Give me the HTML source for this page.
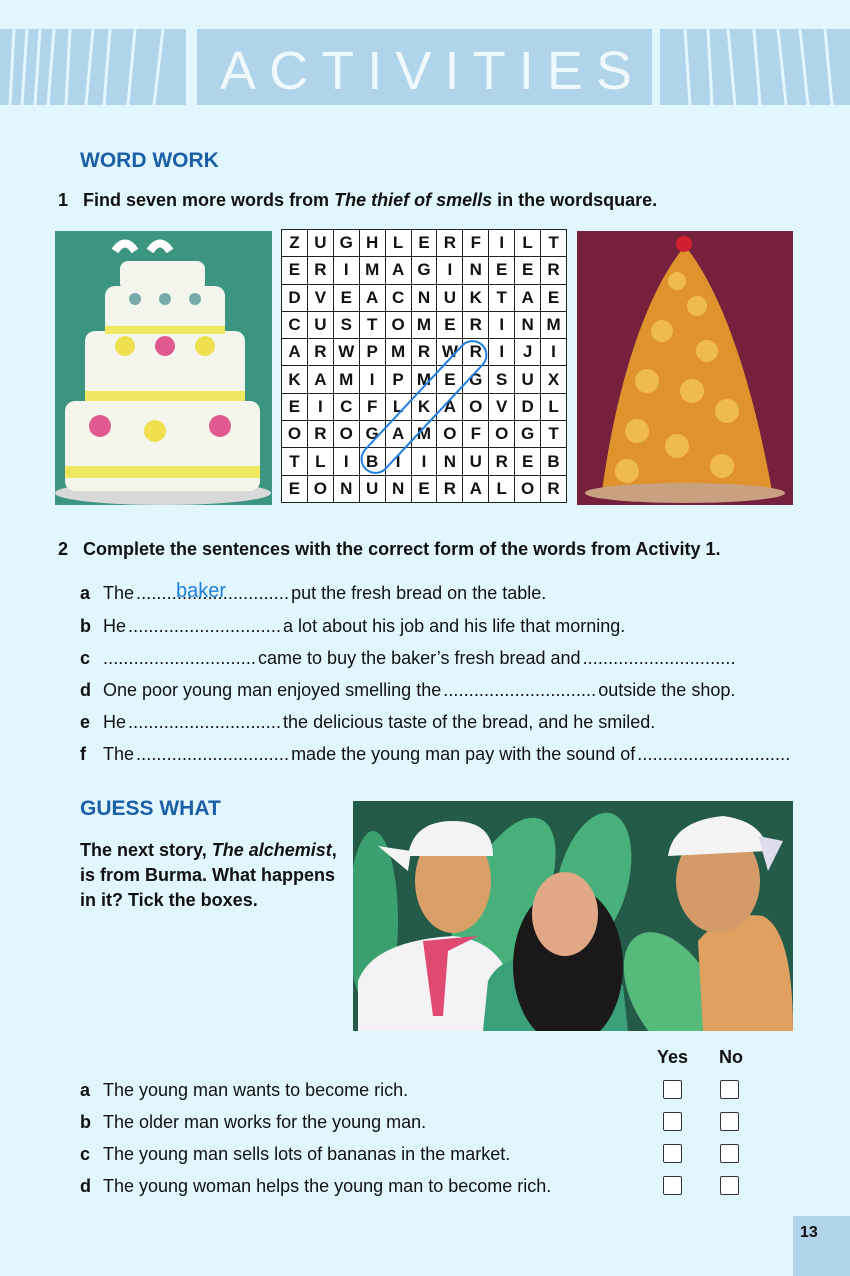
<!DOCTYPE html>
<html><head><meta charset="utf-8"><style>
body{margin:0;width:850px;height:1276px;background:#e2f6fd;position:relative;overflow:hidden;font-family:"Liberation Sans",sans-serif;color:#111}
.a{position:absolute;white-space:nowrap}
.b{font-weight:bold}
.h{color:#1a5fa8;font-weight:bold;font-size:21px}
.t{font-size:18px}
.d{letter-spacing:0.1px;margin:0 2px}
.l{font-weight:bold;font-size:18px}
.cb{position:absolute;width:17px;height:17px;border:1.5px solid #333;border-radius:2px;background:#fff}
table{border-collapse:collapse;background:#fff;table-layout:fixed;width:286px;height:274px}
td{border:1.5px solid #222;text-align:center;font-weight:bold;font-size:17px;padding:0}
</style></head><body>
<svg class="a" style="left:0;top:0" width="850" height="120">
<g fill="#b0d4ea">
<rect x="0" y="29" width="186" height="76"/>
<rect x="197" y="29" width="455" height="76"/>
<rect x="660" y="29" width="190" height="76"/>
</g>
<g stroke="#e2f6fd" stroke-width="3">
<line x1="14" y1="29" x2="10" y2="105"/><line x1="27" y1="29" x2="22" y2="105"/>
<line x1="40" y1="29" x2="35" y2="105"/><line x1="54" y1="29" x2="48" y2="105"/>
<line x1="70" y1="29" x2="66" y2="105"/><line x1="93" y1="29" x2="86" y2="105"/>
<line x1="110" y1="29" x2="104" y2="105"/><line x1="135" y1="29" x2="128" y2="105"/>
<line x1="163" y1="29" x2="154" y2="105"/>
<line x1="685" y1="29" x2="690" y2="105"/><line x1="708" y1="29" x2="712" y2="105"/>
<line x1="728" y1="29" x2="735" y2="105"/><line x1="754" y1="29" x2="760" y2="105"/>
<line x1="778" y1="29" x2="786" y2="105"/><line x1="800" y1="29" x2="808" y2="105"/>
<line x1="825" y1="29" x2="832" y2="105"/>
</g>
<text x="220" y="89" fill="#eef8fd" font-family="Liberation Sans" font-size="54" textLength="412" lengthAdjust="spacing">ACTIVITIES</text>
</svg>

<div class="a h" style="left:80px;top:149px">WORD WORK</div>
<div class="a b" style="left:58px;top:190px;font-size:18px">1&nbsp;&nbsp; Find seven more words from <i>The thief of smells</i> in the wordsquare.</div>

<svg class="a" style="left:55px;top:231px" width="217" height="274">
<rect width="217" height="274" fill="#2f8a78"/>
<rect width="217" height="274" fill="#4aa088" opacity=".5"/>
<ellipse cx="108" cy="262" rx="108" ry="12" fill="#d8d8d8"/>
<rect x="10" y="170" width="195" height="90" rx="10" fill="#f4f6ee"/>
<rect x="30" y="100" width="160" height="75" rx="10" fill="#f4f6ee"/>
<rect x="50" y="55" width="120" height="50" rx="10" fill="#f4f6ee"/>
<rect x="65" y="30" width="85" height="30" rx="8" fill="#f4f6ee"/>
<path d="M60,20 q10,-15 20,0 M95,20 q10,-15 20,0" stroke="#fff" stroke-width="8" fill="none"/>
<g fill="#f0e860"><rect x="10" y="235" width="195" height="12"/><rect x="30" y="160" width="160" height="10"/><rect x="50" y="95" width="120" height="8"/></g>
<g fill="#f0e050"><circle cx="70" cy="115" r="10"/><circle cx="150" cy="115" r="10"/><circle cx="100" cy="200" r="11"/></g>
<g fill="#e05a90"><circle cx="110" cy="115" r="10"/><circle cx="45" cy="195" r="11"/><circle cx="165" cy="195" r="11"/></g>
<g fill="#7aa"><circle cx="80" cy="68" r="6"/><circle cx="110" cy="68" r="6"/><circle cx="140" cy="68" r="6"/></g>
</svg>

<table class="a" style="left:281px;top:229px">
<tr><td>Z</td><td>U</td><td>G</td><td>H</td><td>L</td><td>E</td><td>R</td><td>F</td><td>I</td><td>L</td><td>T</td></tr>
<tr><td>E</td><td>R</td><td>I</td><td>M</td><td>A</td><td>G</td><td>I</td><td>N</td><td>E</td><td>E</td><td>R</td></tr>
<tr><td>D</td><td>V</td><td>E</td><td>A</td><td>C</td><td>N</td><td>U</td><td>K</td><td>T</td><td>A</td><td>E</td></tr>
<tr><td>C</td><td>U</td><td>S</td><td>T</td><td>O</td><td>M</td><td>E</td><td>R</td><td>I</td><td>N</td><td>M</td></tr>
<tr><td>A</td><td>R</td><td>W</td><td>P</td><td>M</td><td>R</td><td>W</td><td>R</td><td>I</td><td>J</td><td>I</td></tr>
<tr><td>K</td><td>A</td><td>M</td><td>I</td><td>P</td><td>M</td><td>E</td><td>G</td><td>S</td><td>U</td><td>X</td></tr>
<tr><td>E</td><td>I</td><td>C</td><td>F</td><td>L</td><td>K</td><td>A</td><td>O</td><td>V</td><td>D</td><td>L</td></tr>
<tr><td>O</td><td>R</td><td>O</td><td>G</td><td>A</td><td>M</td><td>O</td><td>F</td><td>O</td><td>G</td><td>T</td></tr>
<tr><td>T</td><td>L</td><td>I</td><td>B</td><td>I</td><td>I</td><td>N</td><td>U</td><td>R</td><td>E</td><td>B</td></tr>
<tr><td>E</td><td>O</td><td>N</td><td>U</td><td>N</td><td>E</td><td>R</td><td>A</td><td>L</td><td>O</td><td>R</td></tr>
</table>
<svg class="a" style="left:0;top:0" width="850" height="520">
<rect x="-14" y="-85" width="28" height="170" rx="14" fill="none" stroke="#1f7fe0" stroke-width="2" transform="translate(424,407) rotate(43)"/>
</svg>

<svg class="a" style="left:577px;top:231px" width="216" height="274">
<rect width="216" height="274" fill="#8a2640"/>
<rect width="216" height="274" fill="#5a1a3a" opacity=".4"/>
<path d="M108,15 C70,60 40,150 25,260 L195,260 C175,150 145,60 108,15Z" fill="#e0932c"/>
<ellipse cx="108" cy="262" rx="100" ry="10" fill="#c9a080"/>
<g fill="#f3c65a" opacity=".8"><circle cx="100" cy="50" r="9"/><circle cx="120" cy="75" r="10"/><circle cx="85" cy="100" r="11"/><circle cx="130" cy="120" r="11"/><circle cx="70" cy="150" r="12"/><circle cx="115" cy="160" r="12"/><circle cx="150" cy="180" r="12"/><circle cx="60" cy="200" r="12"/><circle cx="100" cy="215" r="12"/><circle cx="145" cy="235" r="12"/><circle cx="50" cy="240" r="12"/></g>
<circle cx="107" cy="13" r="8" fill="#d02030"/>
</svg>

<div class="a b" style="left:58px;top:539px;font-size:18px">2&nbsp;&nbsp; Complete the sentences with the correct form of the words from Activity 1.</div>
<div class="a l" style="left:80px;top:583px">a</div><div class="a t" style="left:103px;top:583px">The<span class="d">..............................</span>put the fresh bread on the table.</div>
<div class="a" style="left:176px;top:580px;color:#1f7fe0;font-size:20px">baker</div>
<div class="a l" style="left:80px;top:616px">b</div><div class="a t" style="left:103px;top:616px">He<span class="d">..............................</span>a lot about his job and his life that morning.</div>
<div class="a l" style="left:80px;top:648px">c</div><div class="a t" style="left:101px;top:648px"><span class="d">..............................</span>came to buy the baker’s fresh bread and<span class="d">..............................</span></div>
<div class="a l" style="left:80px;top:680px">d</div><div class="a t" style="left:103px;top:680px">One poor young man enjoyed smelling the<span class="d">..............................</span>outside the shop.</div>
<div class="a l" style="left:80px;top:712px">e</div><div class="a t" style="left:103px;top:712px">He<span class="d">..............................</span>the delicious taste of the bread, and he smiled.</div>
<div class="a l" style="left:80px;top:744px">f</div><div class="a t" style="left:103px;top:744px">The<span class="d">..............................</span>made the young man pay with the sound of<span class="d">..............................</span></div>

<div class="a h" style="left:80px;top:797px">GUESS WHAT</div>
<div class="a b" style="left:80px;top:838px;font-size:18px;line-height:25px">The next story, <i>The alchemist</i>,<br>is from Burma. What happens<br>in it? Tick the boxes.</div>

<svg class="a" style="left:353px;top:801px" width="440" height="230">
<rect width="440" height="230" fill="#245a48"/>
<ellipse cx="20" cy="120" rx="25" ry="90" fill="#3aa070"/>
<ellipse cx="150" cy="100" rx="40" ry="90" fill="#48b07a" transform="rotate(25 150 100)"/>
<ellipse cx="240" cy="80" rx="35" ry="70" fill="#48b07a" transform="rotate(15 240 80)"/>
<ellipse cx="320" cy="195" rx="40" ry="70" fill="#56ba7a" transform="rotate(-30 320 195)"/>
<path d="M5,230 L5,180 Q20,140 100,135 Q150,140 160,190 L160,230Z" fill="#f4f2f4"/>
<path d="M70,140 L80,215 L90,215 L95,150 L125,135Z" fill="#e04a70"/>
<ellipse cx="100" cy="80" rx="38" ry="52" fill="#d8a068"/>
<path d="M55,55 Q60,20 100,20 Q140,20 140,55 Z" fill="#f4f4f4"/><path d="M25,45 L58,50 L55,70Z" fill="#f4f4f4"/>
<path d="M130,230 L135,180 Q150,150 200,155 Q250,150 270,185 L275,230Z" fill="#3aa07a"/>
<ellipse cx="215" cy="165" rx="55" ry="80" fill="#1a1818"/>
<ellipse cx="212" cy="113" rx="33" ry="42" fill="#e0a886"/>
<path d="M350,230 L345,140 Q370,110 410,115 Q440,130 440,230Z" fill="#e0a060"/>
<ellipse cx="365" cy="80" rx="42" ry="52" fill="#d49a68"/>
<path d="M315,55 Q320,20 370,15 Q410,20 415,50 Z" fill="#f4f4f4"/><path d="M405,35 L430,40 L415,70Z" fill="#dde"/>
</svg>

<div class="a b" style="left:657px;top:1047px;font-size:18px">Yes</div>
<div class="a b" style="left:719px;top:1047px;font-size:18px">No</div>
<div class="a l" style="left:80px;top:1080px">a</div><div class="a t" style="left:103px;top:1080px">The young man wants to become rich.</div>
<div class="a l" style="left:80px;top:1112px">b</div><div class="a t" style="left:103px;top:1112px">The older man works for the young man.</div>
<div class="a l" style="left:80px;top:1144px">c</div><div class="a t" style="left:103px;top:1144px">The young man sells lots of bananas in the market.</div>
<div class="a l" style="left:80px;top:1176px">d</div><div class="a t" style="left:103px;top:1176px">The young woman helps the young man to become rich.</div>
<div class="cb" style="left:663px;top:1080px"></div><div class="cb" style="left:720px;top:1080px"></div>
<div class="cb" style="left:663px;top:1112px"></div><div class="cb" style="left:720px;top:1112px"></div>
<div class="cb" style="left:663px;top:1144px"></div><div class="cb" style="left:720px;top:1144px"></div>
<div class="cb" style="left:663px;top:1176px"></div><div class="cb" style="left:720px;top:1176px"></div>

<div class="a" style="left:793px;top:1216px;width:57px;height:60px;background:#b0d4ea"></div>
<div class="a b" style="left:800px;top:1224px;font-size:16px">13</div>
</body></html>
